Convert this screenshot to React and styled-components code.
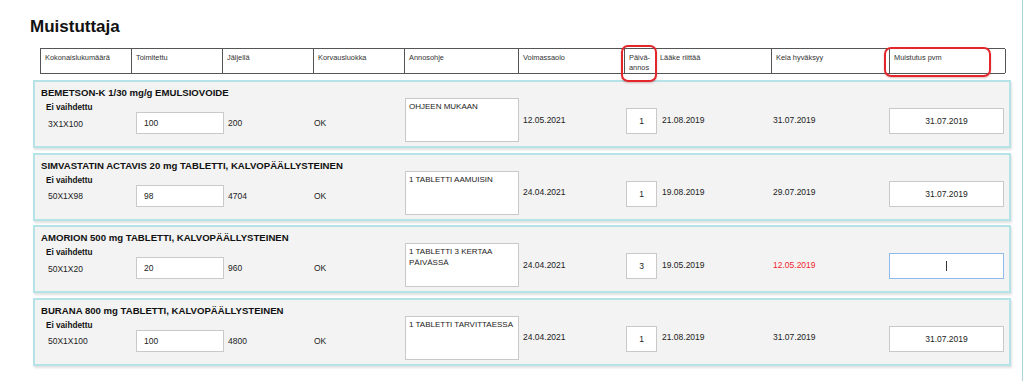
import React from "react";
import styled, { createGlobalStyle } from "styled-components";

const GlobalStyle = createGlobalStyle`
  html, body {
    margin: 0;
    padding: 0;
    background: #fff;
  }
  body {
    font-family: "Liberation Sans", Arial, sans-serif;
    color: #222;
  }
`;

const COLUMNS = "91px 91px 91px 91px 114px 106px 31px 116px 118px 116px";

const headers = [
  { label: "Kokonaislukumäärä" },
  { label: "Toimitettu" },
  { label: "Jäljellä" },
  { label: "Korvausluokka" },
  { label: "Annosohje" },
  { label: "Voimassaolo" },
  { label: "Päivä-\nannos", open: true, mark: "small" },
  { label: "Lääke riittää" },
  { label: "Kela hyväksyy" },
  { label: "Muistutus pvm", mark: "wide" },
];

const rows = [
  {
    name: "BEMETSON-K 1/30 mg/g EMULSIOVOIDE",
    pack: "3X1X100",
    delivered: "100",
    left: "200",
    cls: "OK",
    dosing: "OHJEEN MUKAAN",
    valid: "12.05.2021",
    daily: "1",
    lasts: "21.08.2019",
    kela: "31.07.2019",
    remind: "31.07.2019",
  },
  {
    name: "SIMVASTATIN ACTAVIS 20 mg TABLETTI, KALVOPÄÄLLYSTEINEN",
    pack: "50X1X98",
    delivered: "98",
    left: "4704",
    cls: "OK",
    dosing: "1 TABLETTI AAMUISIN",
    valid: "24.04.2021",
    daily: "1",
    lasts: "19.08.2019",
    kela: "29.07.2019",
    remind: "31.07.2019",
  },
  {
    name: "AMORION 500 mg TABLETTI, KALVOPÄÄLLYSTEINEN",
    pack: "50X1X20",
    delivered: "20",
    left: "960",
    cls: "OK",
    dosing: "1 TABLETTI 3 KERTAA PÄIVÄSSÄ",
    valid: "24.04.2021",
    daily: "3",
    lasts: "19.05.2019",
    kela: "12.05.2019",
    kelaLate: true,
    remind: "",
    focused: true,
  },
  {
    name: "BURANA 800 mg TABLETTI, KALVOPÄÄLLYSTEINEN",
    pack: "50X1X100",
    delivered: "100",
    left: "4800",
    cls: "OK",
    dosing: "1 TABLETTI TARVITTAESSA",
    valid: "24.04.2021",
    daily: "1",
    lasts: "21.08.2019",
    kela: "31.07.2019",
    remind: "31.07.2019",
  },
];

export default function App() {
  return (
    <>
      <GlobalStyle />
      <Page>
        <Title>Muistuttaja</Title>

        <HeaderRow>
          {headers.map((h) => (
            <HeaderCell key={h.label} $open={h.open}>
              {h.label.split("\n").map((line) => (
                <div key={line}>{line}</div>
              ))}
              {h.mark && <Marker $kind={h.mark} />}
            </HeaderCell>
          ))}
        </HeaderRow>

        <CardList>
          {rows.map((r) => (
            <Card key={r.name}>
              <DrugName>{r.name}</DrugName>
              <CardGrid>
                <PackCell>
                  <Status>Ei vaihdettu</Status>
                  <Value $indent={2}>{r.pack}</Value>
                </PackCell>
                <Cell $left={5} $top={14}>
                  <Field $w={88} $h={22}>{r.delivered}</Field>
                </Cell>
                <Cell $left={6} $top={20}>
                  <Value>{r.left}</Value>
                </Cell>
                <Cell $left={1} $top={20}>
                  <Value>{r.cls}</Value>
                </Cell>
                <Cell $left={1} $top={0}>
                  <NoteBox>{r.dosing}</NoteBox>
                </Cell>
                <Cell $left={5} $top={16.5}>
                  <Value>{r.valid}</Value>
                </Cell>
                <Cell $left={2} $top={10}>
                  <Field $w={31} $h={26} $center>
                    {r.daily}
                  </Field>
                </Cell>
                <Cell $left={7} $top={16.5}>
                  <Value>{r.lasts}</Value>
                </Cell>
                <Cell $left={2} $top={16.5}>
                  <Value $late={r.kelaLate}>{r.kela}</Value>
                </Cell>
                <Cell $left={0} $top={10}>
                  <Field $w={115} $h={26} $center $focused={r.focused}>
                    {r.focused ? <Caret /> : r.remind}
                  </Field>
                </Cell>
              </CardGrid>
            </Card>
          ))}
        </CardList>
      </Page>
    </>
  );
}

const Page = styled.div`
  box-sizing: border-box;
  width: 1023px;
  min-height: 100vh;
  padding-top: 17px;
  border-right: 1px solid #a9d3d9;
`;

const Title = styled.h1`
  margin: 0 0 0 30px;
  font-size: 17px;
  line-height: 20px;
  font-weight: bold;
  color: #111;
`;

const HeaderRow = styled.div`
  display: grid;
  grid-template-columns: ${COLUMNS};
  width: 965px;
  height: 26px;
  box-sizing: border-box;
  margin: 11px 0 0 40px;
  border: 1px solid #555;
  border-right: none;
`;

const HeaderCell = styled.div`
  position: relative;
  padding: 4px 4px 0;
  font-size: 7.4px;
  line-height: 9.5px;
  color: #333;
  border-right: ${(p) => (p.$open ? "none" : "1px solid #555")};
`;

const Marker = styled.span`
  position: absolute;
  box-sizing: border-box;
  border: 2px solid #e2262b;
  border-radius: 7px;
  box-shadow: 0 1px 2px rgba(120, 0, 0, 0.25);
  pointer-events: none;
  ${(p) =>
    p.$kind === "small"
      ? `left: -4px; top: -4px; width: 36px; height: 37px;`
      : `left: -6px; top: -2px; width: 107px; height: 30px;`}
`;

const CardList = styled.div`
  display: flex;
  flex-direction: column;
  gap: 4.5px;
  margin: 6px 0 0 33px;
`;

const Card = styled.div`
  box-sizing: border-box;
  width: 978px;
  height: 68px;
  padding: 5px 4px 4px 5px;
  background: #f3f3f3;
  border: 2px solid #b5e3e8;
  box-shadow: 1px 2px 2px rgba(0, 0, 0, 0.12);
`;

const DrugName = styled.div`
  margin-left: 1px;
  font-size: 9.6px;
  line-height: 11px;
  font-weight: bold;
  color: #111;
  white-space: nowrap;
`;

const CardGrid = styled.div`
  display: grid;
  grid-template-columns: ${COLUMNS};
  height: 44px;
  align-items: start;
`;

const Cell = styled.div`
  padding-left: ${(p) => p.$left}px;
  margin-top: ${(p) => p.$top}px;
  min-width: 0;
`;

const PackCell = styled.div`
  display: flex;
  flex-direction: column;
  gap: 5.5px;
  padding: 4px 0 0 6px;
`;

const Status = styled.div`
  font-size: 8.2px;
  line-height: 11px;
  font-weight: bold;
  color: #111;
`;

const Value = styled.div`
  margin-left: ${(p) => p.$indent || 0}px;
  font-size: 8.5px;
  line-height: 11px;
  color: ${(p) => (p.$late ? "#f0262e" : "#222")};
  white-space: nowrap;
`;

const Field = styled.div`
  box-sizing: border-box;
  width: ${(p) => p.$w}px;
  height: ${(p) => p.$h}px;
  display: flex;
  align-items: center;
  justify-content: ${(p) => (p.$center ? "center" : "flex-start")};
  padding: ${(p) => (p.$center ? "0" : "0 7px")};
  background: #fff;
  border: 1px solid ${(p) => (p.$focused ? "#8fb9ec" : "#c9c9c9")};
  font-size: 8.5px;
  color: #222;
  white-space: nowrap;
`;

const Caret = styled.span`
  display: block;
  width: 1px;
  height: 10px;
  background: #333;
`;

const NoteBox = styled.div`
  box-sizing: border-box;
  width: 114px;
  height: 44px;
  padding: 3px 3px;
  background: #fff;
  border: 1px solid #c9c9c9;
  font-size: 8px;
  line-height: 10.5px;
  color: #222;
  overflow: hidden;
`;
